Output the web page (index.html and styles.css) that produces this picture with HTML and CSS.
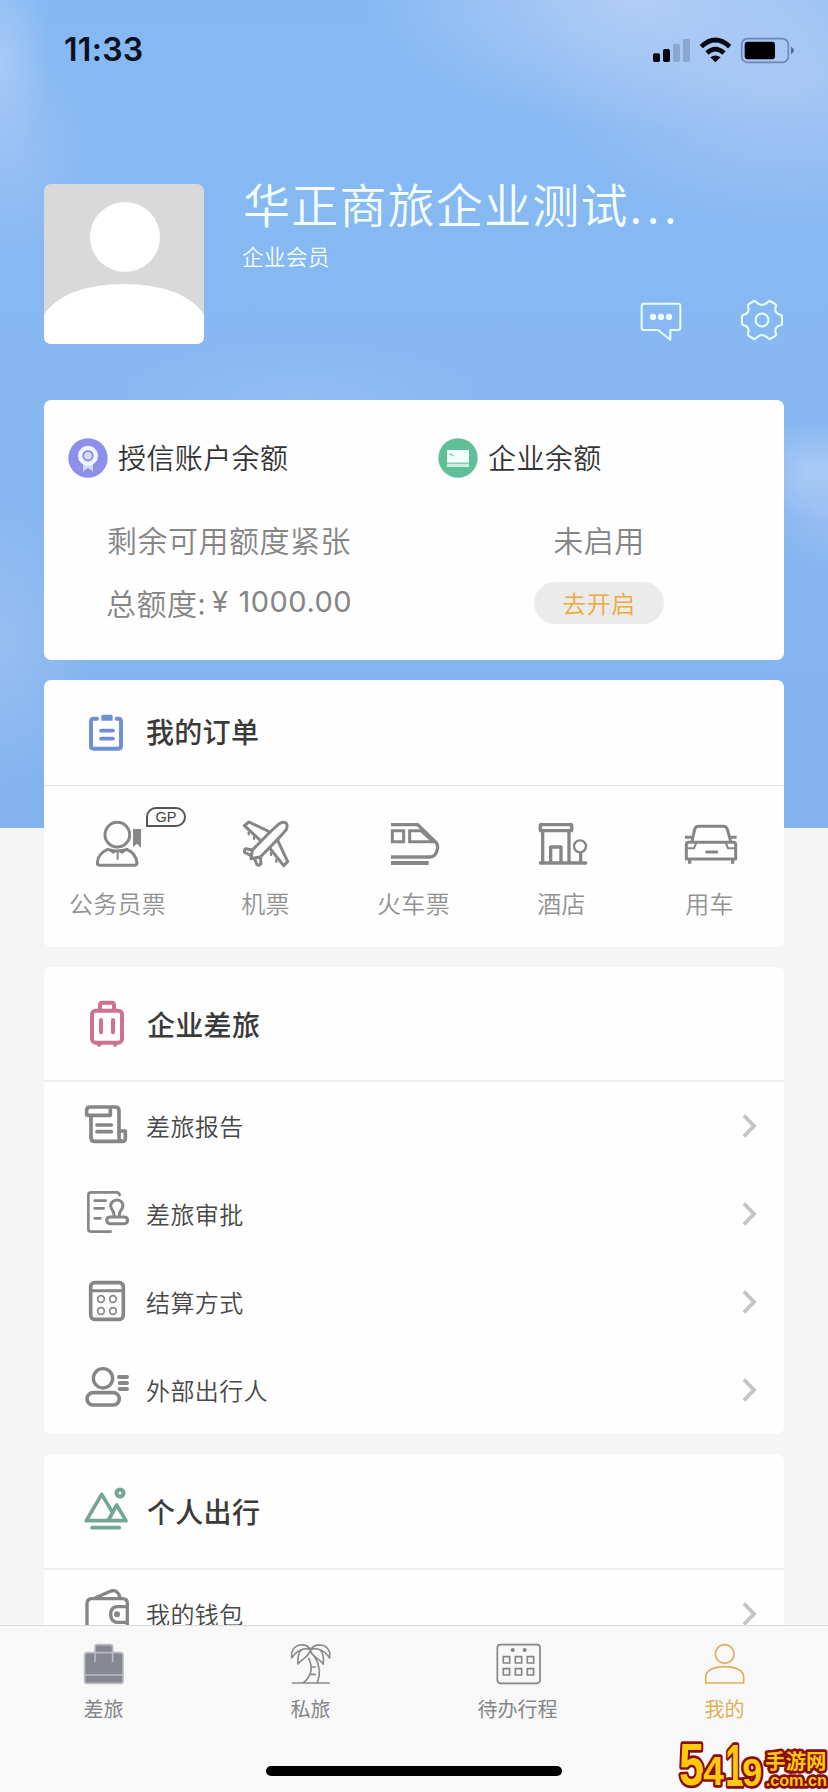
FILE: index.html
```html
<!DOCTYPE html>
<html lang="zh-CN">
<head>
<meta charset="utf-8">
<title>我的</title>
<link rel="stylesheet" href="styles.css">
</head>
<body>
<div class="page">
  <header class="status">
    <span class="clock">11:33</span>
    <svg class="status-icons" viewBox="159 45 426 84">
      <g fill="#030810">
        <rect x="159" y="97" width="21" height="26" rx="5"/><rect x="189" y="84" width="21" height="39" rx="5"/>
        <path d="M331 109Q346 98 362 109L346 124Z"/>
      </g>
      <g fill="#8ba6d0"><rect x="219" y="68" width="21" height="55" rx="5"/><rect x="249" y="54" width="21" height="69" rx="5"/></g>
      <g fill="none" stroke="#030810" stroke-width="14"><path d="M304 77Q346 37 389 77"/><path d="M321 96Q346 73 372 96"/></g>
      <rect x="425" y="53" width="140" height="71" rx="18" fill="none" stroke="#6d89b5" stroke-width="5"/>
      <rect x="434" y="62" width="91" height="53" rx="9" fill="#000"/>
      <path d="M573 77Q582 82 582 88T573 100Z" fill="#526a90"/>
    </svg>
  </header>

  <section class="profile">
    <svg class="avatar" viewBox="0 0 160 160">
      <rect width="160" height="160" fill="#d8d9d8"/>
      <circle cx="81" cy="53" r="35" fill="#fff"/>
      <path d="M0 131C12 111 42 100 80 100S148 111 160 131V160H0Z" fill="#fff"/>
    </svg>
    <div class="who">
      <h1 class="name">华正商旅企业测试<span class="dots">...</span></h1>
      <p class="level">企业会员</p>
      <div class="actions">
        <svg class="action" viewBox="60 54 126 132" width="42" height="44" fill="none" stroke="#e6ffff" stroke-width="6" stroke-linejoin="round">
          <path d="M72 71H174Q181 71 181 78V143Q181 150 174 150H151V179L114 150H72Q65 150 65 143V78Q65 71 72 71Z"/>
          <g fill="#eff" stroke="none"><circle cx="99" cy="111" r="9.500"/><circle cx="123" cy="111" r="9.500"/><circle cx="147" cy="111" r="9.500"/></g>
        </svg>
        <svg class="action" viewBox="-22 -22 44 44" width="44" height="44" fill="none" stroke="#e6ffff" stroke-width="2.100" stroke-linejoin="round">
          <path d="M20 -3.500Q20 -4.500 19 -5Q11.500 -6.500 14 -14Q14.200 -15.500 13 -16L8 -19Q7 -19.500 6 -18Q0 -12 -6 -18Q-7 -19.500 -8 -19L-13 -16Q-14.200 -15.500 -14 -14Q-11.500 -6.500 -19 -5Q-20 -4.500 -20 -3.500V3.500Q-20 4.500 -19 5Q-11.500 6.500 -14 14Q-14.200 15.500 -13 16L-8 19Q-7 19.500 -6 18Q0 12 6 18Q7 19.500 8 19L13 16Q14.200 15.500 14 14Q11.500 6.500 19 5Q20 4.500 20 3.500Z"/>
          <circle r="6.500"/>
        </svg>
      </div>
    </div>
  </section>

  <main class="cards">
    <section class="card balance">
      <div class="account">
        <div class="account-title">
          <svg viewBox="-20 -20 40 40" width="40" height="40">
            <circle r="19.700" fill="#8e8fea"/>
            <path d="M-5 4V13.500L0 10L5 13.500V4Z" fill="#d3dcfd"/>
            <circle cy="-2.300" r="10" fill="#f2f6ff"/>
            <circle cy="-2.300" r="4.800" fill="#dcd9f8" stroke="#8e94dc" stroke-width="2"/>
          </svg>
          <h2>授信账户余额</h2>
        </div>
        <p class="amount">剩余可用额度紧张</p>
        <p class="amount second">总额度:<span class="yen">¥</span><span class="number">1000.00</span></p>
      </div>
      <div class="account">
        <div class="account-title">
          <svg viewBox="-20 -20 40 40" width="40" height="40">
            <circle r="19.700" fill="#5fbf98"/>
            <rect x="-11" y="-8" width="22" height="17" rx="1" fill="#f3fffb"/>
            <rect x="-11" y="4.500" width="22" height="1.500" fill="#84ceb0"/><rect x="-11" y="6" width="22" height="3" fill="#c9eedf"/>
            <path d="M-9 -4L-6 -3L-4 -2" stroke="#5fbf98" fill="none"/>
          </svg>
          <h2>企业余额</h2>
        </div>
        <p class="amount">未启用</p>
        <p class="amount second"><span class="pill">去开启</span></p>
      </div>
    </section>

    <section class="card orders">
      <div class="card-head">
        <svg class="icon" viewBox="120 112 150 150" stroke="#6f8fd6" stroke-width="12" fill="none" stroke-linecap="round">
          <path d="M171 144H161Q153 144 153 152V226Q153 234 161 234H235Q243 234 243 226V152Q243 144 235 144H230"/>
          <path d="M183 180H219M183 204H219" stroke-width="11"/>
          <path d="M189 132H213Q218 132 218 137V150H184V137Q184 132 189 132Z" fill="#6f8fd6" stroke="none"/>
        </svg>
        <h3>我的订单</h3>
      </div>
      <div class="order-grid">
        <div class="order">
          <svg class="order-icon" viewBox="144 435 180 180" fill="none" stroke="#868686" stroke-width="9" stroke-linejoin="round">
            <circle cx="232" cy="494" r="37"/>
            <path d="M205 537Q172 552 172 579Q172 586 180 586H283Q291 586 291 579Q288 548 257 537"/>
            <path d="M202 537L220 548L233 541L246 548L262 537Q232 546 202 537ZM233 542V569" stroke-width="6"/>
            <path d="M279 477H303V533L291 521L279 531Z" fill="#868686" stroke="none"/>
          </svg>
          <span class="gp">GP</span>
          <span class="order-label">公务员票</span>
        </div>
        <div class="order">
          <svg class="order-icon" viewBox="588 435 180 180" fill="none" stroke="#868686" stroke-width="9" stroke-linejoin="round" stroke-linecap="round">
            <path d="M690 486L718 461Q730 453 739 460Q744 467 738 480L712 509L661 561L633 566L637 540Z"/>
            <path d="M690 486L627 456L613 467L661 511M712 509L743 575L731 587L689 534"/>
            <path d="M637 540L618 536Q611 540 614 547L632 556M661 561L663 581Q658 588 651 584L643 565"/>
            <path d="M626 488V493M642 501V507M693 549V555M709 570V575" stroke-width="7"/>
          </svg>
          <span class="order-label">机票</span>
        </div>
        <div class="order">
          <svg class="order-icon" viewBox="1032 435 180 180" fill="none" stroke="#868686" stroke-width="10">
            <path d="M1053 464H1133L1188 517Q1195 524 1192 538Q1188 561 1170 561H1053"/>
            <path d="M1057 482H1091V515H1057ZM1109 482H1143L1179 515H1109Z" stroke-width="9"/>
            <path d="M1053 579H1166" stroke-width="12"/>
          </svg>
          <span class="order-label">火车票</span>
        </div>
        <div class="order">
          <svg class="order-icon" viewBox="336 105 180 180" fill="none" stroke="#868686" stroke-width="10" stroke-linejoin="round">
            <path d="M361 134H455V152H361ZM368 154V247M447 154V247M392 247V201H423V247"/>
            <path d="M361 249H497" stroke-linecap="round"/>
            <circle cx="480" cy="199" r="18" stroke-width="7"/><path d="M482 218V247"/>
          </svg>
          <span class="order-label">酒店</span>
        </div>
        <div class="order">
          <svg class="order-icon" viewBox="780 105 180 180" fill="none" stroke="#868686" stroke-width="9" stroke-linejoin="round">
            <path d="M816 184L824 148Q827 139 836 139H910Q919 139 922 148L932 184M795 172H817M930 172H950"/>
            <path d="M806 187H940Q947 187 947 194V237H799V194Q799 187 806 187Z"/>
            <path d="M800 205H822L829 188M946 205H924L917 188" stroke-width="6"/>
            <path d="M860 216H890" stroke-linecap="round"/><path d="M809 237V251M938 237V251" stroke-width="10"/>
          </svg>
          <span class="order-label">用车</span>
        </div>
      </div>
    </section>

    <section class="card company">
      <div class="card-head tall">
        <svg class="icon" viewBox="120 118 150 150" stroke="#ce7193" stroke-width="12" fill="none" stroke-linecap="round">
          <rect x="156" y="153" width="90" height="96" rx="11"/>
          <path d="M180 151V136Q180 129 187 129H214Q222 129 222 136V151M183 181V218M219 181V218M177 255H178M225 255H226"/>
        </svg>
        <h3>企业差旅</h3>
      </div>
      <div class="row">
        <svg class="icon" viewBox="120 425 150 150" stroke="#868686" stroke-width="11" fill="none" stroke-linejoin="round">
          <path d="M140 471V453Q140 443 150 443H226Q237 443 237 454V531Q237 546 248 546Q256 546 256 535V515H239M153 471V535Q153 546 164 546H248M140 468H211V444"/>
          <path d="M171 497H214M171 517H214" stroke-linecap="round"/>
        </svg>
        <span class="row-label">差旅报告</span>
        <svg class="chevron" viewBox="0 0 16 24"><path d="M2 1.500L12 12L2 22.500"/></svg>
      </div>
      <div class="row">
        <svg class="icon" viewBox="120 690 150 150" stroke="#868686" stroke-width="8" fill="none" stroke-linecap="round" stroke-linejoin="round">
          <path d="M239 708Q238 700 229 700H154Q145 700 145 709V809Q145 818 154 818H212M164 725H197M164 748H191M164 778H181"/>
          <path d="M222 769Q222 759 216 751Q207 738 218 728Q231 718 244 728Q253 738 245 751Q238 759 238 769M211 774H252Q263 774 263 784T252 794H211Q200 794 200 784T211 774Z" stroke-width="9"/>
        </svg>
        <span class="row-label">差旅审批</span>
        <svg class="chevron" viewBox="0 0 16 24"><path d="M2 1.500L12 12L2 22.500"/></svg>
      </div>
      <div class="row">
        <svg class="icon" viewBox="120 954 150 150" stroke="#868686" fill="none">
          <rect x="152" y="971" width="98" height="110" rx="12" stroke-width="11"/><path d="M152 995H250" stroke-width="9"/>
          <g stroke-width="5"><circle cx="183" cy="1020" r="10"/><circle cx="219" cy="1020" r="10"/><circle cx="183" cy="1056" r="10"/><circle cx="219" cy="1056" r="10"/></g>
        </svg>
        <span class="row-label">结算方式</span>
        <svg class="chevron" viewBox="0 0 16 24"><path d="M2 1.500L12 12L2 22.500"/></svg>
      </div>
      <div class="row">
        <svg class="icon" viewBox="120 1218 150 150" stroke="#868686" stroke-width="10" fill="none" stroke-linecap="round">
          <circle cx="189" cy="1258" r="29"/><rect x="141" y="1301" width="97" height="37" rx="18.500" stroke-width="11"/>
          <path d="M237 1254H261M239 1272H261M239 1290H261" stroke-width="12"/>
        </svg>
        <span class="row-label">外部出行人</span>
        <svg class="chevron" viewBox="0 0 16 24"><path d="M2 1.500L12 12L2 22.500"/></svg>
      </div>
    </section>

    <section class="card personal">
      <div class="card-head tall">
        <svg class="icon" viewBox="120 142 150 150" stroke="#74a793" stroke-width="11" fill="none" stroke-linejoin="round" stroke-linecap="round">
          <path d="M139 246L185 167L218 222M139 246H258L230 199L207 241M156 267H238"/><circle cx="240" cy="163" r="10.500" stroke-width="12"/>
        </svg>
        <h3>个人出行</h3>
      </div>
      <div class="row">
        <svg class="icon" viewBox="120 450 150 150" stroke="#868686" stroke-width="10" fill="none" stroke-linejoin="round">
          <path d="M155 479H248Q262 479 262 493V570Q262 585 248 585H155Q141 585 141 571V495Q141 479 155 479ZM165 477L211 457Q222 452 231 459Q238 465 240 477M262 503H229Q212 506 212 526T229 550H262"/>
          <circle cx="231" cy="526" r="9" fill="#868686" stroke="none"/>
        </svg>
        <span class="row-label">我的钱包</span>
        <svg class="chevron" viewBox="0 0 16 24"><path d="M2 1.500L12 12L2 22.500"/></svg>
      </div>
    </section>
  </main>

  <nav class="tabs">
    <div class="tab">
      <svg class="tab-icon" viewBox="118 600 144 144" fill="none" stroke="#b9bac1" stroke-width="5">
        <path d="M163 638V621Q163 614 170 614H209Q216 614 216 621V638" fill="#858791"/>
        <rect x="132" y="638" width="115" height="92" rx="8" fill="#858791"/>
        <path d="M163 638V667M216 638V667M133 705H247"/>
      </svg>
      <span>差旅</span>
    </div>
    <div class="tab">
      <svg class="tab-icon" viewBox="739 600 144 144" fill="none" stroke="#8b8b8b" stroke-width="5" stroke-linejoin="round" stroke-linecap="round">
        <path d="M755 729H866M804 655C817 681 814 709 788 728M822 650C841 681 839 705 830 728M814 681H824M812 703H824"/>
        <path d="M810 629C796 608 761 610 753 638V654C763 640 770 633 781 630C790 625 802 625 810 629M810 629C824 608 859 610 867 638V654C857 640 850 633 839 630C830 625 818 625 810 629"/>
        <path d="M781 630C772 640 770 651 772 672C784 655 803 654 809 631C815 654 836 655 848 672C850 651 848 640 839 630"/>
      </svg>
      <span>私旅</span>
    </div>
    <div class="tab">
      <svg class="tab-icon" viewBox="160 180 144 144" fill="none" stroke="#858585" stroke-width="5">
        <rect x="170" y="194" width="128" height="116" rx="9"/>
        <path d="M188 230H207V249H188ZM224 230H243V249H224ZM260 230H279V249H260ZM188 266H207V285H188ZM224 266H243V285H224ZM260 266H279V285H260Z"/>
        <g fill="#858585" stroke="none"><circle cx="216" cy="210" r="6"/><circle cx="252" cy="210" r="6"/></g>
      </svg>
      <span>待办行程</span>
    </div>
    <div class="tab active">
      <svg class="tab-icon" viewBox="781 180 144 144" fill="none" stroke="#dcae55" stroke-width="5">
        <circle cx="852" cy="222" r="28"/><path d="M795 309V291C795 271 820 260 852 260S909 271 909 291V309Z"/>
      </svg>
      <span>我的</span>
    </div>
  </nav>
  <div class="home-bar"></div>

  <svg class="stamp" viewBox="0 0 504 216">
    <g class="stamp-text">
      <text x="57" y="194" font-size="178" textLength="76" lengthAdjust="spacingAndGlyphs">5</text>
      <text x="130" y="196" font-size="124" textLength="62" lengthAdjust="spacingAndGlyphs">4</text>
      <text x="196" y="198" font-size="178" textLength="56" lengthAdjust="spacingAndGlyphs">1</text>
      <text x="247" y="197" font-size="114" textLength="60" lengthAdjust="spacingAndGlyphs">9</text>
      <text class="stamp-cjk" x="316" y="147" font-size="61">手游网</text>
      <text x="317" y="199" font-size="50" textLength="184" lengthAdjust="spacingAndGlyphs">.com.cn</text>
    </g>
  </svg>
</div>
</body>
</html>
```
FILE: styles.css
```css
* { box-sizing: border-box; }

body {
  margin: 0;
  font-family: "Noto Sans CJK SC", sans-serif;
}

h1, h2, h3, p { margin: 0; font-weight: 400; }

svg { display: block; flex: none; }

.page {
  position: relative;
  display: flex;
  flex-direction: column;
  width: 828px;
  height: 1792px;
  overflow: hidden;
  background-color: #f5f5f6;
  background-image:
    radial-gradient(ellipse 50px 100px at 0 60px, rgba(176, 206, 247, .8), rgba(176, 206, 247, 0)),
    radial-gradient(ellipse 80px 110px at 10px 150px, rgba(165, 198, 246, .6), rgba(165, 198, 246, 0)),
    radial-gradient(ellipse 270px 130px at 640px 0, rgba(183, 207, 247, .9), rgba(183, 207, 247, 0)),
    radial-gradient(ellipse 250px 150px at 790px 80px, rgba(170, 199, 244, .95), rgba(170, 199, 244, 0)),
    radial-gradient(ellipse 65px 50px at 815px 470px, rgba(180, 207, 247, .8), rgba(180, 207, 247, 0)),
    radial-gradient(ellipse 60px 60px at 828px 510px, rgba(168, 197, 243, .6), rgba(168, 197, 243, 0)),
    radial-gradient(ellipse 200px 60px at 300px 400px, rgba(160, 197, 245, .4), rgba(160, 197, 245, 0)),
    radial-gradient(ellipse 90px 150px at 0 640px, rgba(160, 195, 243, .7), rgba(160, 195, 243, 0)),
    linear-gradient(#86b9f2, #87b8f1 40%, #83b3ee);
  background-repeat: no-repeat;
  background-size: 100% 828px;
}

.status {
  display: flex;
  justify-content: space-between;
  align-items: center;
  height: 100px;
  padding: 0 33px 0 64px;
}

.clock {
  font: 600 32px/1 Inter, sans-serif;
  letter-spacing: .3px;
  color: #07101d;
}

.status-icons { width: 142px; height: 28px; }

.profile {
  display: flex;
  gap: 38px;
  height: 300px;
  padding: 84px 44px 0;
  color: #f4ffff;
}

.avatar { width: 160px; height: 160px; border-radius: 7px; }

.who { flex: 1; }

.name {
  height: 44px;
  padding-left: 1px;
  font-size: 47px;
  font-weight: 350;
  line-height: 38px;
  letter-spacing: 1.200px;
  white-space: nowrap;
}

.dots { letter-spacing: 4.500px; padding-left: 1px; }

.level {
  font-size: 21.500px;
  font-weight: 350;
  line-height: 28px;
  padding-top: 14px;
  letter-spacing: .5px;
}

.actions {
  display: flex;
  justify-content: flex-end;
  align-items: center;
  gap: 58px;
  padding-top: 28px;
}

.cards {
  display: flex;
  flex-direction: column;
  gap: 20px;
  padding: 0 44px;
}

.card {
  flex: none;
  overflow: hidden;
  border-radius: 7px;
  background: #fefefe;
}

.balance { display: flex; height: 260px; }

.account { flex: 1; padding-top: 28px; }

.account-title {
  display: flex;
  align-items: center;
  gap: 10px;
  height: 60px;
  padding-left: 24px;
}

.account-title h2 {
  padding-bottom: 2px;
  font-size: 28px;
  font-weight: 350;
  letter-spacing: .4px;
  color: #333;
}

.amount {
  display: flex;
  justify-content: center;
  align-items: center;
  height: 60px;
  margin-top: 22px;
  padding-bottom: 3px;
  font-size: 30px;
  font-weight: 350;
  letter-spacing: .5px;
  color: #858585;
}

.amount.second { margin-top: 2px; padding-bottom: 1px; }

.yen, .number { font-family: Inter, sans-serif; font-weight: 400; font-size: 29px; }
.yen { margin: 0 10px 0 6px; }

.pill {
  height: 42px;
  width: 130px;
  margin-top: 2px;
  border-radius: 21px;
  background: #ebebeb;
  color: #eda93a;
  font-size: 24px;
  font-weight: 350;
  line-height: 42px;
  text-align: center;
}

.orders { height: 267px; }

.card-head {
  display: flex;
  align-items: center;
  gap: 16px;
  height: 106px;
  padding-left: 36px;
  border-bottom: 1px solid #e2e2e2;
}

.card-head.tall { height: 116px; border-bottom: 2px solid #eee; }

.card-head h3 {
  padding-bottom: 3px;
  font-size: 28px;
  font-weight: 500;
  letter-spacing: .3px;
  color: #3a3a3a;
}

.card-head.tall h3 { padding: 0 0 0 1px; }

.icon { width: 50px; height: 50px; }

.order-grid {
  display: grid;
  grid-template-columns: repeat(5, 148px);
}

.order {
  position: relative;
  display: flex;
  flex-direction: column;
  align-items: center;
  padding-top: 29px;
}

.order-icon { width: 60px; height: 60px; }

.order-label {
  margin: 10px 0 0 -1px;
  font-size: 24px;
  font-weight: 350;
  line-height: 36px;
  letter-spacing: .3px;
  color: #929292;
}

.gp {
  position: absolute;
  left: 102px;
  top: 21px;
  width: 40px;
  height: 20px;
  border: 2px solid #555;
  border-radius: 10px 10px 10px 0;
  font: 14.500px/17px "Liberation Sans", sans-serif;
  text-align: center;
  color: #444;
}

.company { height: 467px; }

.company .card-head { height: 115px; }

.row {
  display: flex;
  align-items: center;
  gap: 16px;
  height: 88px;
  padding: 0 26px 0 36px;
}

.row-label {
  flex: 1;
  padding-bottom: 2px;
  font-size: 24px;
  font-weight: 350;
  letter-spacing: .4px;
  color: #484848;
}

.chevron {
  width: 16px;
  height: 24px;
  fill: none;
  stroke: #c4c4c6;
  stroke-width: 3.800px;
}

.tabs {
  position: absolute;
  left: 0;
  right: 0;
  bottom: 0;
  display: flex;
  height: 167px;
  padding-top: 14px;
  border-top: 1px solid #dcdcdc;
  background: #f8f8f8;
}

.tab {
  flex: 1;
  display: flex;
  flex-direction: column;
  align-items: center;
  gap: 6px;
  font-size: 20px;
  line-height: 30px;
  color: #85868a;
}

.tab.active { color: #ddb057; }

.tab-icon { width: 48px; height: 48px; }

.home-bar {
  position: absolute;
  left: 266px;
  bottom: 16px;
  width: 296px;
  height: 10px;
  border-radius: 5px;
  background: #000;
}

.stamp {
  position: absolute;
  right: 0;
  bottom: 0;
  width: 168px;
  height: 72px;
}

.stamp-text {
  font-family: "Liberation Sans", sans-serif;
  font-weight: 700;
  fill: #ffc90e;
  stroke: #8b0d0a;
  stroke-width: 16px;
  stroke-linejoin: round;
  paint-order: stroke;
}

.stamp-cjk { font-family: "Noto Sans CJK SC", sans-serif; }
```
